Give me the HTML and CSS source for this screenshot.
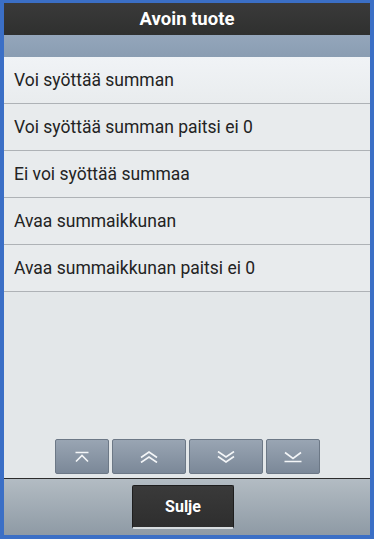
FILE: index.html
```html
<!DOCTYPE html>
<html>
<head>
<meta charset="utf-8">
<link rel="stylesheet" href="styles.css">
</head>
<body>
<div class="frame">
  <div class="title">Avoin tuote</div>
  <div class="band"></div>
  <ul class="list">
    <li class="row first">Voi syöttää summan</li>
    <li class="row">Voi syöttää summan paitsi ei 0</li>
    <li class="row">Ei voi syöttää summaa</li>
    <li class="row">Avaa summaikkunan</li>
    <li class="row">Avaa summaikkunan paitsi ei 0</li>
  </ul>
  <div class="spacer"></div>
  <div class="nav">
    <button class="navbtn small" aria-label="Ensimmäinen">
      <svg width="16" height="12" viewBox="0 0 16 12"><path d="M1.5 1.5H14.5M2 10.5L8 4.5L14 10.5" fill="none" stroke="#f4f6f8" stroke-width="1.6"/></svg>
    </button>
    <button class="navbtn wide" aria-label="Ylös">
      <svg width="22" height="12" viewBox="0 0 22 12"><path d="M3 6.5L11 1L19 6.5M3 11.5L11 6L19 11.5" fill="none" stroke="#f4f6f8" stroke-width="1.6"/></svg>
    </button>
    <button class="navbtn wide" aria-label="Alas">
      <svg width="22" height="12" viewBox="0 0 22 12"><path d="M3 0.5L11 6L19 0.5M3 5.5L11 11L19 5.5" fill="none" stroke="#f4f6f8" stroke-width="1.6"/></svg>
    </button>
    <button class="navbtn small" aria-label="Viimeinen">
      <svg width="22" height="12" viewBox="0 0 22 12"><path d="M3 1.5L11 7.5L19 1.5M2.5 10.5H19.5" fill="none" stroke="#f4f6f8" stroke-width="1.6"/></svg>
    </button>
  </div>
  <div class="footer">
    <button class="close">Sulje</button>
  </div>
</div>
</body>
</html>
```
FILE: styles.css
```css
html, body {
  margin: 0;
  padding: 0;
  background: #3b6fc6;
}
body {
  width: 374px;
  height: 539px;
  overflow: hidden;
}
.frame {
  box-sizing: border-box;
  width: 374px;
  height: 539px;
  border-style: solid;
  border-color: #3b6fc6;
  border-width: 3px 4px 4px 4px;
  display: flex;
  flex-direction: column;
  background: #e3e7e9;
  font-family: Roboto, "Liberation Sans", Arial, sans-serif;
}
.title {
  height: 32px;
  flex: none;
  background: linear-gradient(#3a3a3a, #2f302f);
  color: #ffffff;
  font-weight: bold;
  font-size: 18.5px;
  line-height: 32px;
  text-align: center;
}
.band {
  height: 22px;
  flex: none;
  background: linear-gradient(#94a6bb, #8a9db2);
}
.list {
  list-style: none;
  margin: 0;
  padding: 0;
  flex: none;
}
.row {
  box-sizing: border-box;
  height: 47px;
  padding-left: 10px;
  line-height: 46px;
  font-size: 17.5px;
  color: #232323;
  background: #e8ebed;
  border-bottom: 1px solid #aeb2b6;
}
.row.first {
  background: linear-gradient(#f0f3f6, #e9ecee);
}
.spacer {
  flex: 1;
}
.nav {
  display: flex;
  justify-content: center;
  gap: 3px;
  padding-bottom: 4px;
  border-bottom: 1px solid #2c2c2c;
}
.navbtn {
  height: 35px;
  border: 1px solid #6c7886;
  border-radius: 2px;
  background: linear-gradient(#99a5b3, #7b8898);
  display: flex;
  align-items: center;
  justify-content: center;
  padding: 0;
}
.navbtn.small { width: 54px; }
.navbtn.wide { width: 74px; }
.footer {
  flex: none;
  height: 56px;
  background: linear-gradient(#b3bcc3, #8e9aa5);
  display: flex;
  justify-content: center;
  align-items: center;
}
.close {
  width: 102px;
  height: 44px;
  margin-right: 8px;
  background: linear-gradient(#3a3a3a, #2e2e2e);
  border: 1px solid #1e1e1e;
  border-bottom: 2px solid #d8dde0;
  border-radius: 2px;
  color: #ffffff;
  font-family: Roboto, "Liberation Sans", Arial, sans-serif;
  font-weight: bold;
  font-size: 16px;
  padding: 0;
}
```
